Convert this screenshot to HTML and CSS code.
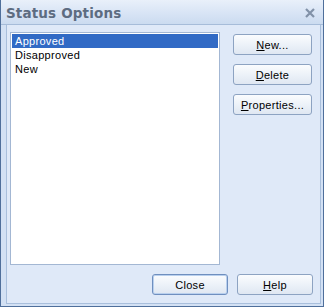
FILE: index.html
```html
<!DOCTYPE html>
<html>
<head>
<meta charset="utf-8">
<link rel="stylesheet" href="styles.css">
</head>
<body>
<div class="window">
  <div class="titlebar">
    <span class="title">Status Options</span>
    <svg class="close-x" width="10" height="10" viewBox="0 0 10 10">
      <path d="M1 1 L9 9 M9 1 L1 9" stroke="#8191a8" stroke-width="2.2" fill="none"/>
    </svg>
  </div>
  <div class="frame">
    <div class="panel">
      <div class="main">
        <div class="listbox">
          <div class="item selected">Approved</div>
          <div class="item">Disapproved</div>
          <div class="item">New</div>
        </div>
        <div class="side">
          <button class="btn side-btn"><u>N</u>ew...</button>
          <button class="btn side-btn"><u>D</u>elete</button>
          <button class="btn side-btn"><u>P</u>roperties...</button>
        </div>
      </div>
      <div class="footer">
        <button class="btn foot-btn default">Close</button>
        <button class="btn foot-btn"><u>H</u>elp</button>
      </div>
    </div>
  </div>
</div>
</body>
</html>
```
FILE: styles.css
```css
html, body {
  margin: 0;
  padding: 0;
  background: #ffffff;
}
.window {
  width: 324px;
  height: 307px;
  box-sizing: border-box;
  border: 1px solid #4f6f9b;
  border-top: none;
  display: flex;
  flex-direction: column;
  background: #d3e1f4;
  font-family: "Liberation Sans", Arial, sans-serif;
  font-size: 11px;
  color: #000;
}
.titlebar {
  height: 25px;
  box-sizing: border-box;
  border-bottom: 1px solid #a6bcd9;
  background: linear-gradient(to bottom, #e9f0fa 0%, #d8e4f5 55%, #cbdbf0 100%);
  display: flex;
  align-items: center;
  justify-content: space-between;
  padding: 0 8px 0 5px;
}
.title {
  font-family: "DejaVu Sans", sans-serif;
  font-weight: bold;
  font-size: 13.5px;
  color: #5d6c81;
  letter-spacing: 0.15px;
  margin-top: 1px;
}
.close-x {
  display: block;
  margin-top: 1px;
}
.frame {
  flex: 1;
  display: flex;
  padding: 0 2px 2px 5px;
}
.panel {
  flex: 1;
  box-sizing: border-box;
  border: 1px solid #a9bfdc;
  border-top: none;
  background: #dfe9f8;
  display: flex;
  flex-direction: column;
  padding: 7px 7px 6px 3px;
}
.main {
  display: flex;
  gap: 13px;
  height: 233px;
}
.listbox {
  width: 210px;
  box-sizing: border-box;
  border: 1px solid #a3b7d3;
  background: #ffffff;
  padding: 1px;
}
.item {
  height: 14px;
  line-height: 14px;
  padding-left: 3px;
  letter-spacing: 0.3px;
}
.item.selected {
  background: #316ac5;
  color: #ffffff;
}
.side {
  display: flex;
  flex-direction: column;
  gap: 9px;
  padding-top: 2px;
}
.btn {
  box-sizing: border-box;
  height: 21px;
  border: 1px solid #8da3c2;
  border-radius: 3px;
  background: linear-gradient(to bottom, #fbfcfe 0%, #eef3f9 45%, #dfe7f2 100%);
  font-family: "Liberation Sans", Arial, sans-serif;
  font-size: 11px;
  letter-spacing: 0.3px;
  color: #000;
  padding: 0;
  margin: 0;
  text-align: center;
}
.side-btn {
  width: 79px;
}
.footer {
  margin-top: 9px;
  display: flex;
  justify-content: flex-end;
  gap: 9px;
}
.foot-btn {
  width: 76px;
}
.btn.default {
  border-color: #6f8fbf;
  box-shadow: inset 0 0 0 1px #b9d0ee;
}
```
